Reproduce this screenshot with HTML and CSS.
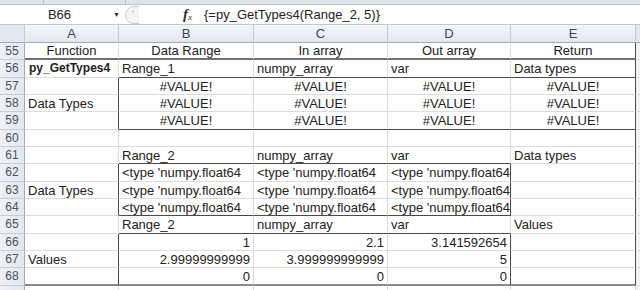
FILE: index.html
```html
<!DOCTYPE html>
<html lang="en">
<head>
  <meta charset="UTF-8">
  <title>py_GetTypes4</title>
  <link rel="stylesheet" href="styles.css">
</head>
<body>

<div class="top-strip">
  <span class="seg seg-a"></span>
  <span class="seg seg-b"></span>
</div>

<div class="formula-bar">
  <div class="name-box">
    <span class="cell-ref">B66</span>
    <span class="drop">&#9660;</span>
  </div>
  <div class="splitter">
    <svg width="14" height="18" viewBox="0 0 14 18">
      <path d="M14 0.5 H9 A8.5 8.5 0 0 0 9 17.5 H14" fill="#f3f4f6" stroke="#c6cbd2"/>
      <rect x="7" y="5" width="2" height="1.5" fill="#c0c4ca"/>
    </svg>
  </div>
  <div class="fx"><i>f</i><sub>x</sub></div>
  <div class="formula">{=py_GetTypes4(Range_2, 5)}</div>
</div>

<div class="sheet">
  <!-- column headers -->
  <div class="hd corner"></div>
  <div class="hd">A</div>
  <div class="hd">B</div>
  <div class="hd">C</div>
  <div class="hd">D</div>
  <div class="hd">E</div>
  <div class="hd edge"></div>

  <!-- 55 -->
  <div class="rn">55</div>
  <div class="c mid thick">Function</div>
  <div class="c mid thick">Data Range</div>
  <div class="c mid thick">In array</div>
  <div class="c mid thick">Out array</div>
  <div class="c mid thick last">Return</div>
  <div class="c edge"></div>

  <!-- 56 -->
  <div class="rn">56</div>
  <div class="c bold">py_GetTypes4</div>
  <div class="c dk-b">Range_1</div>
  <div class="c dk-b">numpy_array</div>
  <div class="c dk-b">var</div>
  <div class="c dk-b last">Data types</div>
  <div class="c edge"></div>

  <!-- 57 -->
  <div class="rn">57</div>
  <div class="c dk-r"></div>
  <div class="c mid">#VALUE!</div>
  <div class="c mid">#VALUE!</div>
  <div class="c mid">#VALUE!</div>
  <div class="c mid last">#VALUE!</div>
  <div class="c edge"></div>

  <!-- 58 -->
  <div class="rn">58</div>
  <div class="c dk-r">Data Types</div>
  <div class="c mid">#VALUE!</div>
  <div class="c mid">#VALUE!</div>
  <div class="c mid">#VALUE!</div>
  <div class="c mid last">#VALUE!</div>
  <div class="c edge"></div>

  <!-- 59 -->
  <div class="rn">59</div>
  <div class="c dk-r"></div>
  <div class="c mid dk-b">#VALUE!</div>
  <div class="c mid dk-b">#VALUE!</div>
  <div class="c mid dk-b">#VALUE!</div>
  <div class="c mid dk-b last">#VALUE!</div>
  <div class="c edge"></div>

  <!-- 60 -->
  <div class="rn">60</div>
  <div class="c"></div>
  <div class="c"></div>
  <div class="c"></div>
  <div class="c"></div>
  <div class="c last"></div>
  <div class="c edge"></div>

  <!-- 61 -->
  <div class="rn">61</div>
  <div class="c"></div>
  <div class="c dk-b">Range_2</div>
  <div class="c dk-b">numpy_array</div>
  <div class="c dk-b">var</div>
  <div class="c last">Data types</div>
  <div class="c edge"></div>

  <!-- 62 -->
  <div class="rn">62</div>
  <div class="c dk-r"></div>
  <div class="c">&lt;type 'numpy.float64</div>
  <div class="c">&lt;type 'numpy.float64</div>
  <div class="c dk-r">&lt;type 'numpy.float64</div>
  <div class="c last"></div>
  <div class="c edge"></div>

  <!-- 63 -->
  <div class="rn">63</div>
  <div class="c dk-r">Data Types</div>
  <div class="c">&lt;type 'numpy.float64</div>
  <div class="c">&lt;type 'numpy.float64</div>
  <div class="c dk-r">&lt;type 'numpy.float64</div>
  <div class="c last"></div>
  <div class="c edge"></div>

  <!-- 64 -->
  <div class="rn">64</div>
  <div class="c dk-r"></div>
  <div class="c dk-b">&lt;type 'numpy.float64</div>
  <div class="c dk-b">&lt;type 'numpy.float64</div>
  <div class="c dk-b dk-r">&lt;type 'numpy.float64</div>
  <div class="c last"></div>
  <div class="c edge"></div>

  <!-- 65 -->
  <div class="rn">65</div>
  <div class="c"></div>
  <div class="c dk-b">Range_2</div>
  <div class="c dk-b">numpy_array</div>
  <div class="c dk-b">var</div>
  <div class="c last">Values</div>
  <div class="c edge"></div>

  <!-- 66 -->
  <div class="rn">66</div>
  <div class="c dk-r"></div>
  <div class="c num">1</div>
  <div class="c num">2.1</div>
  <div class="c num dk-r">3.141592654</div>
  <div class="c last"></div>
  <div class="c edge"></div>

  <!-- 67 -->
  <div class="rn">67</div>
  <div class="c dk-r">Values</div>
  <div class="c num">2.99999999999</div>
  <div class="c num">3.999999999999</div>
  <div class="c num dk-r">5</div>
  <div class="c last"></div>
  <div class="c edge"></div>

  <!-- 68 -->
  <div class="rn">68</div>
  <div class="c dk-r foot"></div>
  <div class="c num foot">0</div>
  <div class="c num foot">0</div>
  <div class="c num dk-r foot">0</div>
  <div class="c last foot"></div>
  <div class="c edge"></div>

  <!-- 69 -->
  <div class="rn"></div>
  <div class="c"></div>
  <div class="c"></div>
  <div class="c"></div>
  <div class="c"></div>
  <div class="c"></div>
  <div class="c edge"></div>
</div>

</body>
</html>
```

FILE: styles.css
```css
body {
  margin: 0;
  width: 640px;
  height: 290px;
  overflow: hidden;
  background: #fff;
  font-family: "Liberation Sans", Arial, sans-serif;
  font-size: 13px;
  color: #222;
}

/* thin strip above the formula bar */
.top-strip {
  height: 4px;
  background: #dfe4ea;
  position: relative;
  border-bottom: 1px solid #b8c0ca;
}

.seg {
  position: absolute;
  top: 0;
  width: 1px;
  height: 4px;
  background: #b8c0ca;
}

.seg-a { left: 43px; }
.seg-b { left: 125px; }

/* formula bar */
.formula-bar {
  display: flex;
  align-items: center;
  height: 19px;
  border-bottom: 1px solid #c2c8d0;
  background: #fff;
}

.name-box {
  width: 125px;
  display: flex;
  align-items: center;
  height: 100%;
}

.cell-ref {
  flex: 1;
  text-align: center;
  padding-left: 6px;
}

.drop {
  font-size: 7px;
  color: #333;
  margin-right: 5px;
}

.splitter {
  display: flex;
  align-items: center;
  height: 100%;
}

.fx {
  margin-left: 44px;
  width: 20px;
  font-family: "Liberation Serif", serif;
  font-size: 15px;
  font-weight: bold;
  color: #333;
}

.fx sub {
  font-size: 9px;
  font-style: italic;
  font-weight: normal;
  vertical-align: -1px;
}

.formula {
  padding-left: 1px;
}

/* grid */
.sheet {
  display: grid;
  grid-template-columns: 25px 94px 135px 134px 123px 125px 4px;
  grid-template-rows: 18px repeat(15, 17.35px);
}

.hd {
  background: linear-gradient(#f4f6f9, #e3e8ee);
  border-right: 1px solid #c5ccd6;
  border-bottom: 1px solid #9eabbd;
  text-align: center;
  line-height: 18px;
  color: #3f4652;
  box-sizing: border-box;
}

.hd.corner {
  background: #e3e8ee;
}

.rn {
  background: linear-gradient(90deg, #eef1f5, #e3e8ee);
  border-right: 1px solid #9eabbd;
  border-bottom: 1px solid #c5ccd6;
  text-align: center;
  font-size: 12px;
  color: #4a5260;
  box-sizing: border-box;
  line-height: 17px;
}

.c {
  border-right: 1px solid #dadcdd;
  border-bottom: 1px solid #dadcdd;
  box-sizing: border-box;
  padding: 0 3px;
  white-space: nowrap;
  overflow: hidden;
  line-height: 17px;
}

.mid { text-align: center; }
.num { text-align: right; }
.bold { font-weight: bold; font-size: 12px; padding-left: 4px; }

.thick { border-bottom: 2px solid #707070; line-height: 16px; }
.dk-b { border-bottom: 1px solid #4a4a4a; }
.dk-r { border-right: 1px solid #4a4a4a; }
.last { border-right: 1px solid #4a4a4a; }
.foot { border-bottom: 2px solid #8a8a8a; }

.edge {
  background: #f2f3f5;
  border-right: none;
  padding: 0;
}

.hd.edge {
  background: #e3e8ee;
}
```
